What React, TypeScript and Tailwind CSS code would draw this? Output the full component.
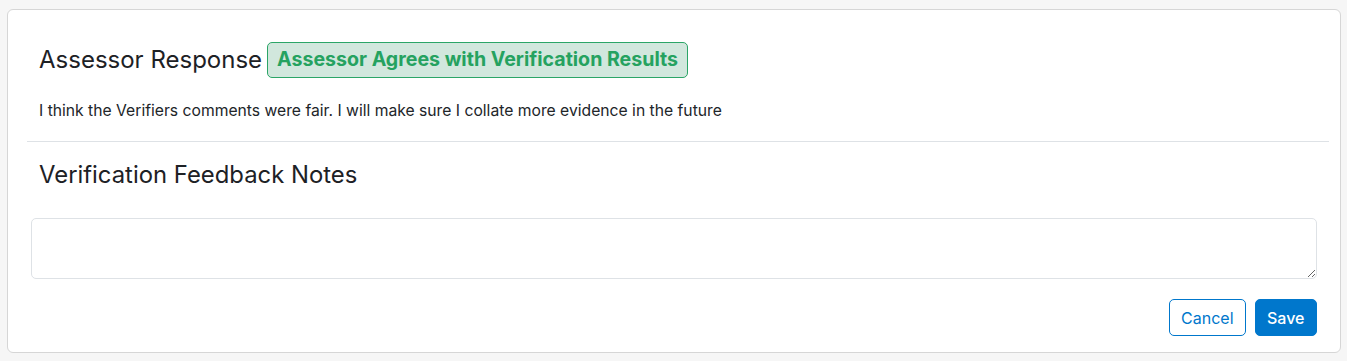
import React from "react";

export default function App() {
  return (
    <div className="min-h-[361px] bg-[#f6f6f6] pt-[9px] pb-[8px] pl-[7px] pr-[6px]" style={{ fontFamily: "Inter, 'Noto Sans', sans-serif" }}>
      <div className="rounded-[6px] border border-[#d6d6d6] bg-white pl-[19px] pr-[11px] pt-[32px] pb-[16px]">
        <div className="px-3">
          <div className="flex h-[36px] items-center gap-[5px]">
            <h4 className="text-[24px] font-normal leading-none text-[#1d2125]">Assessor Response</h4>
            <span className="inline-flex h-[36px] items-center rounded-[5px] border border-[#2ba567] bg-[#d1e7dd] px-[9px] text-[19.6px] font-bold text-[#25a260]">
              Assessor Agrees with Verification Results
            </span>
          </div>
          <p className="mt-[22px] text-[15.7px] leading-[22px] text-[#212529]">
            I think the Verifiers comments were fair. I will make sure I collate more evidence in the future
          </p>
        </div>
        <hr className="mt-[19px] border-t border-[#dee2e6]" />
        <div className="px-3">
          <h4 className="mt-[20px] text-[23.85px] leading-[26px] font-normal text-[#1d2125]">Verification Feedback Notes</h4>
        </div>
        <div className="mt-[30px] pl-1 pr-3">
          <textarea className="block h-[61px] w-full rounded-[5px] border border-[#dee2e6] bg-white" />
          <div className="mt-[20px] flex justify-end gap-[9px]">
            <button className="h-[37px] rounded-[5px] border border-[#0077cc] bg-white px-[11px] text-[16px] text-[#0077cc]">Cancel</button>
            <button className="h-[37px] rounded-[5px] border border-[#0077cc] bg-[#0077cc] px-[11.5px] text-[16px] font-medium text-white">Save</button>
          </div>
        </div>
      </div>
    </div>
  );
}
